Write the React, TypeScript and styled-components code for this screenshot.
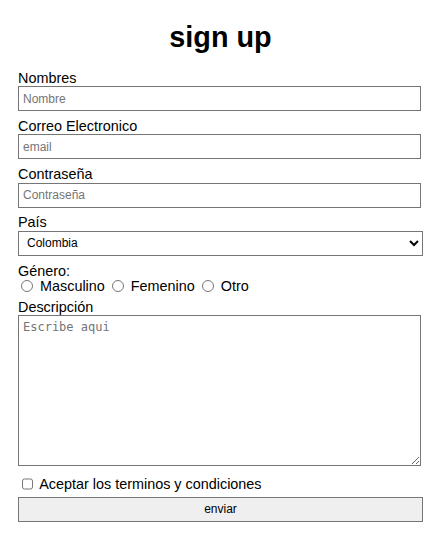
import React from "react";
import styled, { createGlobalStyle } from "styled-components";

const GlobalStyle = createGlobalStyle`
  body {
    margin: 0;
    background: #ffffff;
    color: #000000;
    font-family: "Liberation Sans", Arial, sans-serif;
  }
`;

/**
 * Sign up form
 */
const Form = styled.form`
  display: flex;
  flex-direction: column;
  align-items: flex-start;
  padding: 20.5px 17px 0 18px;
  font-size: 14.4px;
`;

const Title = styled.h1`
  align-self: stretch;
  margin: 0 0 16px;
  font-size: 28.8px;
  font-weight: 700;
  line-height: 33px;
  text-align: center;
`;

const FieldLabel = styled.label`
  display: block;
  line-height: 16.5px;
`;

const TextInput = styled.input`
  box-sizing: border-box;
  width: 403px;
  height: 25px;
  margin: 0 0 6.8px;
  padding: 0 4px;
  border: 1px solid #767676;
  border-radius: 0;
  font-family: "Liberation Sans", Arial, sans-serif;
  font-size: 12px;
  color: #000;

  &::placeholder {
    color: #757575;
  }
`;

const Select = styled.select`
  box-sizing: border-box;
  width: 405px;
  height: 25px;
  margin: 0 0 7px;
  padding: 0 0 0 4px;
  border: 1px solid #767676;
  border-radius: 0;
  background: #ffffff;
  font-family: "Liberation Sans", Arial, sans-serif;
  font-size: 12px;
  color: #000;
`;

const OptionRow = styled.div<{ $height: number; $lineHeight: number }>`
  height: ${(p) => p.$height}px;
  line-height: ${(p) => p.$lineHeight}px;
  white-space: nowrap;
`;

const Radio = styled.input.attrs({ type: "radio" })`
  width: 12px;
  height: 12px;
  margin: 0 3px;
  vertical-align: -1px;
`;

const Checkbox = styled.input.attrs({ type: "checkbox" })`
  width: 11.7px;
  height: 11.7px;
  margin: 0 2.7px 0 3.6px;
  vertical-align: -1px;
`;

const TextArea = styled.textarea`
  box-sizing: border-box;
  width: 403px;
  height: 151px;
  margin: 0;
  padding: 4px 4px 2px;
  border: 1px solid #767676;
  border-radius: 0;
  font-family: "DejaVu Sans Mono", "Liberation Mono", monospace;
  font-size: 12px;

  &::placeholder {
    color: #757575;
  }
`;

const TermsRow = styled.label`
  display: block;
  margin-top: 9.5px;
  line-height: 16.5px;
`;

const SubmitButton = styled.button`
  box-sizing: border-box;
  width: 405px;
  height: 25px;
  margin-top: 4.5px;
  border: 1px solid #767676;
  border-radius: 0;
  background: #efefef;
  font-family: "Liberation Sans", Arial, sans-serif;
  font-size: 12px;
  color: #000;
`;

const genders = ["Masculino", "Femenino", "Otro"];

export default function App() {
  return (
    <>
      <GlobalStyle />
      <Form onSubmit={(e) => e.preventDefault()}>
        <Title>sign up</Title>

        <FieldLabel htmlFor="nombres">Nombres</FieldLabel>
        <TextInput id="nombres" type="text" placeholder="Nombre" />

        <FieldLabel htmlFor="correo">Correo Electronico</FieldLabel>
        <TextInput id="correo" type="email" placeholder="email" />

        <FieldLabel htmlFor="pass">Contraseña</FieldLabel>
        <TextInput id="pass" type="password" placeholder="Contraseña" />

        <FieldLabel htmlFor="pais">País</FieldLabel>
        <Select id="pais" defaultValue="co">
          <option value="co">Colombia</option>
          <option value="mx">México</option>
          <option value="ar">Argentina</option>
        </Select>

        <FieldLabel>Género:</FieldLabel>
        <OptionRow $height={19.2} $lineHeight={14}>
          {genders.map((g, idx) => (
            <React.Fragment key={g}>
              <label>
                <Radio name="genero" value={g} />
                {" "}
                {g}
              </label>
              {idx < genders.length - 1 ? " " : null}
            </React.Fragment>
          ))}
        </OptionRow>

        <FieldLabel htmlFor="desc">Descripción</FieldLabel>
        <TextArea id="desc" placeholder="Escribe aqui" />

        <TermsRow>
          <Checkbox /> Aceptar los terminos y condiciones
        </TermsRow>

        <SubmitButton type="submit">enviar</SubmitButton>
      </Form>
    </>
  );
}
